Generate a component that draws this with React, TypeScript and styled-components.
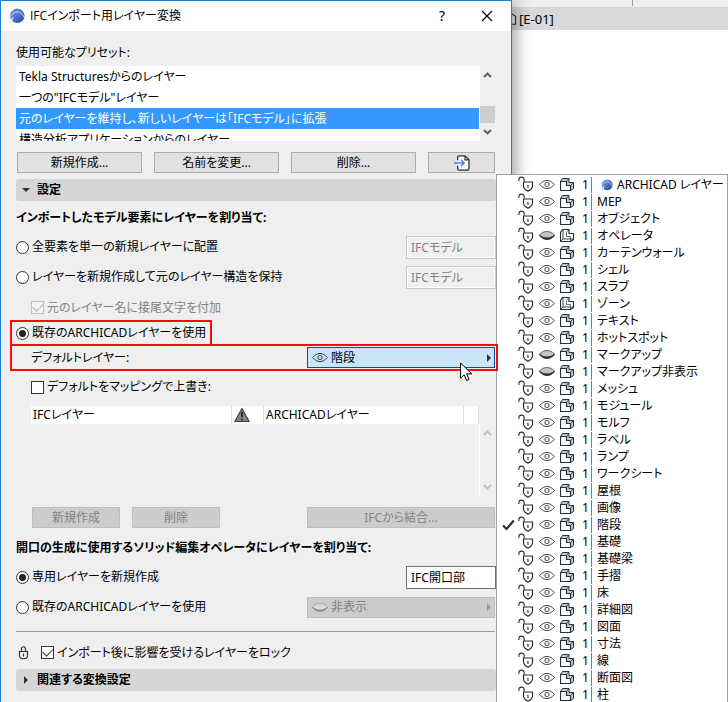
import React, { useState } from "react";
import styled, { createGlobalStyle, css } from "styled-components";

const Global = createGlobalStyle`
  * { box-sizing: border-box; }
  body {
    margin: 0;
    background: #fff;
    color: #000;
    font-family: "Noto Sans", "Noto Sans CJK JP", sans-serif;
    font-size: 12px;
    line-height: 16px;
    font-feature-settings: "palt";
  }
  button, input { font: inherit; font-feature-settings: inherit; color: inherit; margin: 0; }
  svg { display: block; flex: none; }
`;

const INK = "#263238";

/* ---------- icons ---------- */

const Logo = ({ size = 16 }: { size?: number }) => (
  <svg width={size} height={size} viewBox="0 0 16 16" aria-hidden="true">
    <defs>
      <linearGradient id="logoBlue" x1="0" y1="0" x2="1" y2="1">
        <stop offset="0" stopColor="#7d9fe0" />
        <stop offset="1" stopColor="#2345ad" />
      </linearGradient>
    </defs>
    <circle cx="8.2" cy="7.8" r="7.3" fill="url(#logoBlue)" />
    <path d="M.4 10.500C2.500 6 5.500 3.800 8.800 4c3.200.2 5 2.400 6 5.500" fill="none" stroke="#e6edfa" strokeWidth=".8" />
    <path d="M.8 15.200C1.300 12 2.800 9.500 5 8.300c-1.200 2-1.600 4.200-1.500 6.900z" fill="#dfe8f8" />
  </svg>
);

const Unlocked = () => (
  <svg width="16" height="17" viewBox="0 0 16 17" fill="none" stroke={INK} strokeWidth="1.1" aria-hidden="true">
    <path d="M.9 5V3.500C.9.300 6.200.300 6.200 3.500v2.300" />
    <path d="M5.500 6h9v4c0 2.400-2 3.900-4.500 5.200C7.500 13.900 5.500 12.400 5.500 10z" strokeWidth="1.200" />
    <path d="M9.200 9.500h.8v2.500" />
  </svg>
);

const Padlock = () => (
  <svg width="12" height="14" viewBox="0 0 12 14" fill="none" stroke={INK} strokeWidth="1.1" aria-hidden="true">
    <path d="M3.5 5.500V3a2 2.300 0 0 1 4 0v2.500" />
    <path d="M1.500 5.500h8v4.300c0 1.700-1.700 3-4 3s-4-1.300-4-3z" />
    <path d="M5.500 7.500v3" />
  </svg>
);

const Eye = () => (
  <svg width="16" height="9" viewBox="0 0 16 9" fill="none" stroke={INK} aria-hidden="true">
    <path d="M.6 4.500C3 1.700 5.400.5 8 .5s5 1.200 7.400 4C13 7.300 10.600 8.500 8 8.500S3 7.300.6 4.500z" strokeWidth=".9" />
    <rect x="6" y="2.500" width="4" height="4" rx="1.400" strokeWidth=".9" />
    <path d="M7.500 4h1v1h-1z" stroke="none" fill="#aab4b8" />
  </svg>
);

const ClosedEye = ({ faded = false }: { faded?: boolean }) => (
  <svg width="16" height="9" viewBox="0 0 16 9" aria-hidden="true">
    <path d="M.5 4C3 1.500 5.400.500 8 .500s5 1 7.500 3.500C13 6.300 10.600 7.300 8 7.300S3 6.300.5 4z" fill={faded ? "#dadada" : "#c3c7c9"} stroke={faded ? "#999" : INK} strokeWidth=".7" />
    <path d="M.3 3.700C3 5.800 5.400 6.500 8 6.500s5-.7 7.700-2.800V5C13 7.900 10.600 8.900 8 8.900S3 7.900.3 5z" fill={faded ? "#8f8f8f" : INK} />
  </svg>
);

const Solid = () => (
  <svg width="15" height="13" viewBox="0 0 15 13" stroke={INK} strokeLinejoin="round" aria-hidden="true">
    <path d="M.5 3.500 2.500.5h6.500v4h4.500v6l-3 2z" fill="#c3c9cb" />
    <path d="M.5 3.500h6v4h4v5H.5z" fill="#fff" strokeWidth="1.200" />
    <path d="M6.500 3.500 9 .5M10.500 7.500l3-3" fill="none" strokeWidth=".8" />
  </svg>
);

const Wireframe = () => (
  <svg width="15" height="13" viewBox="0 0 15 13" fill="none" stroke={INK} strokeLinejoin="round" aria-hidden="true">
    <path d="M.5 3.500 2.500.5h6.500v4h4.500v6l-3 2H.5z" strokeWidth="1.200" />
    <path d="M3 .5v9.500h10M.5 12.500 3 10" strokeWidth=".9" />
    <path d="M6.500 3.500v4h4v5M6.500 3.500 9 .5" strokeWidth=".7" />
  </svg>
);

const Tick = () => (
  <svg width="13" height="12" viewBox="0 0 13 12" fill="none" stroke={INK} strokeWidth="2.200" aria-hidden="true">
    <path d="M1 6.500 4.500 10 11.800 1.500" />
  </svg>
);

const ImportDoc = () => (
  <svg width="16" height="16" viewBox="0 0 16 16" fill="none" aria-hidden="true">
    <path d="M3.700 5.200V2.200Q3.700.8 5 .8H11l4 4V13.500Q15 15.200 13.500 15.200H5Q3.700 15.200 3.700 13.700V10.800" fill="#fff" stroke={INK} strokeWidth="1.300" />
    <path d="M11 1v3.800h4" stroke={INK} strokeWidth="1.200" />
    <path d="M0 8h10M7 4.800 10.200 8 7 11.200" stroke="#2f86ea" strokeWidth="1.400" />
  </svg>
);

const Warning = () => (
  <svg width="16" height="16" viewBox="0 0 16 16" aria-hidden="true">
    <path d="M8 1.500 15.200 14.500H.8z" fill="#7c868a" stroke="#3a464b" strokeWidth="1.200" strokeLinejoin="round" />
    <path d="M8 5v5.200M8 11.400v1.800" stroke="#1d282d" strokeWidth="1.800" />
  </svg>
);

const Chevron = ({ up = false }: { up?: boolean }) => (
  <svg width="9" height="6" viewBox="0 0 9 6" fill="none" stroke="currentColor" strokeWidth="1.900" aria-hidden="true">
    <path d={up ? "M1 5 4.500 1.500 8 5" : "M1 1 4.500 4.500 8 1"} />
  </svg>
);

const Triangle = ({ down = false }: { down?: boolean }) => (
  <svg width="8" height="8" viewBox="0 0 8 8" fill="currentColor" aria-hidden="true">
    <path d={down ? "M0 2h8L4 6z" : "M2 0v8l4-4z"} />
  </svg>
);

const Close = () => (
  <svg width="12" height="12" viewBox="0 0 12 12" fill="none" stroke="#000" strokeWidth="1.100" aria-hidden="true">
    <path d="M1 1l10 10M11 1 1 11" />
  </svg>
);

const StoryIcon = () => (
  <svg width="11" height="12" viewBox="0 0 11 12" fill="#eee" stroke={INK} strokeWidth="1.100" aria-hidden="true">
    <path d="M1 4 5.500.8 9.500 3.200V11.200H1z" />
  </svg>
);

const Pointer = () => (
  <svg width="13" height="20" viewBox="0 0 13 20" aria-hidden="true">
    <path d="M.6 1v15.200l3.600-3.400 2.500 5.600 2.400-1-2.500-5.500h5.200z" fill="#fff" stroke="#000" strokeWidth="1" />
  </svg>
);

/* ---------- page ---------- */

const Page = styled.div`
  position: relative;
  display: grid;
  grid-template-columns: minmax(0, 1fr) 216px;
  min-height: 100vh;
  overflow: hidden;
`;

const Workspace = styled.div`
  background: #fff;
`;

const RulerStrip = styled.div`
  height: 7px;
  padding-left: 120px;
  background: #efefef;
  &::before {
    content: "";
    display: block;
    width: 1px;
    height: 6px;
    background: #999;
  }
`;

const ViewTab = styled.div`
  display: flex;
  align-items: center;
  gap: 2px;
  height: 23px;
  margin-left: -6px;
  background: #d9d9d9;
  font-size: 13px;
`;

const Dialog = styled.section`
  position: relative;
  border: 1px solid #1b80d2;
  border-bottom: 0;
  background: #efefef;
  box-shadow: 3px 4px 16px rgba(0, 0, 0, 0.4);
`;

const TitleBar = styled.header`
  display: flex;
  align-items: center;
  height: 30px;
  padding: 0 10px 0 8px;
  background: #fff;
`;

const Title = styled.h1`
  flex: 1;
  margin: 0 0 0 5px;
  font-family: "Open Sans", "Noto Sans CJK JP", sans-serif;
  font-size: 12px;
  font-weight: 400;
`;

const TitleButton = styled.button`
  display: grid;
  place-items: center;
  width: 28px;
  height: 28px;
  margin-left: 17px;
  padding: 0;
  border: 0;
  background: none;
  font-size: 14px;
`;

const Body = styled.div`
  display: flex;
  flex-direction: column;
  padding: 0 15px 11px;
`;

const PresetLabel = styled.div`
  padding: 14px 0 5px;
`;

const PresetBox = styled.div`
  display: flex;
  height: 75px;
`;

const PresetList = styled.ul`
  flex: 1;
  margin: 0;
  padding: 0 1px 0 0;
  overflow: hidden;
  list-style: none;
  background: #fff;
`;

const Preset = styled.li<{ $selected?: boolean }>`
  padding: 0 3px;
  line-height: 21px;
  white-space: nowrap;
  ${(p) => p.$selected && css`background: #3399ff; color: #fff;`}
`;

const ScrollBar = styled.div<{ $idle?: boolean }>`
  display: flex;
  flex-direction: column;
  justify-content: space-between;
  width: ${(p) => (p.$idle ? "17px" : "16px")};
  color: ${(p) => (p.$idle ? "#bfbfbf" : "#5c5c5c")};
  border-left: ${(p) => (p.$idle ? "1px solid #fff" : "0")};
`;

const ScrollButton = styled.button`
  display: grid;
  place-items: center;
  width: 15px;
  height: 18px;
  padding: 0;
  border: 0;
  background: none;
  color: inherit;
`;

const Thumb = styled.div`
  width: 15px;
  height: 17px;
  margin-top: auto;
  background: #cdcdcd;
`;

const ButtonRow = styled.div`
  display: grid;
  grid-template-columns: 125fr 125fr 125fr 67fr;
  gap: 12px;
  margin: 11px 1px 6px;
`;

const MappingButtons = styled.div`
  display: flex;
  gap: 12px;
  margin: 11px 1px 0 16px;
`;

const PushButton = styled.button<{ $width?: number; $end?: boolean }>`
  display: flex;
  align-items: center;
  justify-content: center;
  width: ${(p) => (p.$width ? `${p.$width}px` : "auto")};
  height: 21px;
  margin-left: ${(p) => (p.$end ? "auto" : "0")};
  padding: 0;
  border: 1px solid #adadad;
  background: #e1e1e1;
  &:disabled { border-color: #bfbfbf; background: #cccccc; color: #838383; }
`;

const Section = styled.button`
  display: flex;
  align-items: center;
  gap: 7px;
  height: 22px;
  padding: 0 6px;
  border: 0;
  border-radius: 3px;
  background: #d6d6d6;
  color: #333;
  font-weight: 700;
  & > span { color: #000; }
`;

const Heading = styled.h2`
  display: flex;
  align-items: center;
  height: 31px;
  margin: 0;
  padding-top: 2px;
  font-size: 12px;
  font-weight: 700;
`;

const SecondHeading = styled(Heading)`
  height: 34px;
  padding-top: 5px;
`;

const Row = styled.div`
  display: flex;
  align-items: center;
  justify-content: space-between;
  height: 30px;
`;

const Choice = styled.label<{ $disabled?: boolean }>`
  display: flex;
  align-items: center;
  gap: 3px;
  white-space: nowrap;
  color: ${(p) => (p.$disabled ? "#838383" : "#000")};
`;

const Radio = styled.input.attrs({ type: "radio" })`
  appearance: none;
  width: 13px;
  height: 13px;
  border: 1px solid #333;
  border-radius: 50%;
  background: #fff;
  &:checked { background: radial-gradient(circle, #222 0 3px, #fff 4px); }
`;

const Check = styled.input.attrs({ type: "checkbox" })`
  appearance: none;
  display: grid;
  place-items: center;
  width: 13px;
  height: 13px;
  border: 1px solid #333;
  background: #fff;
  &:disabled { border-color: #c0c0c0; background: #f5f5f5; }
  &:checked::after {
    content: "";
    width: 9px;
    height: 5px;
    margin-top: -3px;
    border: solid #333;
    border-width: 0 0 1px 1px;
    rotate: -45deg;
  }
  &:disabled:checked::after { border-color: #b0b0b0; }
`;

const NameInput = styled.input`
  width: 90px;
  height: 23px;
  padding: 0 4px;
  border: 1px solid #707070;
  background: #fff;
  &:disabled {
    border-color: #c8c8c8;
    box-shadow: inset 0 0 0 1px #fff;
    background: #f0f0f0;
    color: #838383;
  }
`;

const SuffixRow = styled.div`
  display: flex;
  align-items: center;
  height: 28px;
  padding: 3px 0 0 15px;
`;

const OverrideRow = styled.div`
  display: flex;
  align-items: center;
  height: 32px;
  padding-left: 15px;
`;

const Callout = styled.div`
  position: relative;
  z-index: 3;
  display: flex;
  align-items: center;
  justify-content: space-between;
  border: 2px solid #fb0a0a;
`;

const UseExisting = styled(Callout)`
  width: fit-content;
  height: 26px;
  margin-left: -6px;
  padding: 0 4px;
`;

const DefaultLayer = styled(Callout)`
  height: 27px;
  margin: -2px -2px 0 -6px;
  padding: 0 1px 0 19px;
`;

const LayerPicker = styled.button`
  display: flex;
  align-items: center;
  gap: 3px;
  width: 188px;
  height: 21px;
  padding: 0 1px 0 4px;
  border: 1px solid #005499;
  background: #cce4f7;
  & > span { flex: 1; text-align: left; }
  & > :last-child { color: #333; }
  &:disabled { border-color: #bfbfbf; background: #cccccc; color: #838383; }
  &:disabled > :last-child { color: #999; }
`;

const PickerRow = styled(Row)`
  padding-right: 1px;
`;

const Cursor = styled.div`
  position: absolute;
  top: 16px;
  right: 23px;
  pointer-events: none;
`;

const Mapping = styled.table`
  width: calc(100% - 32px);
  margin: 3px 0 0 15px;
  border-collapse: collapse;
  table-layout: fixed;
  background: #fff;
`;

const MappingHead = styled.th<{ $width?: number }>`
  width: ${(p) => (p.$width ? `${p.$width}px` : "auto")};
  height: 18px;
  padding: 0 2px;
  border-right: 1px solid #e2e2e2;
  font-weight: 400;
  text-align: left;
`;

const MappingBody = styled.div`
  display: flex;
  justify-content: flex-end;
  height: 72px;
`;

const Divider = styled.hr`
  width: calc(100% - 1px);
  height: 1px;
  margin: 9px 0 0;
  border: 0;
  background: #999;
`;

const LockRow = styled.div`
  display: flex;
  align-items: center;
  gap: 11px;
  height: 37px;
  padding: 4px 0 0 2px;
`;

/* ---------- layer menu ---------- */

const Menu = styled.div`
  position: absolute;
  z-index: 2;
  top: 174px;
  right: 0;
  width: 232px;
  padding-top: 1px;
  border: 1px solid #a0a0a8;
  background: #fff;
`;

const MenuItem = styled.button`
  display: grid;
  grid-template-columns: 21px 21px 21px 22px 9px minmax(0, 1fr);
  align-items: center;
  width: 100%;
  height: 17px;
  padding: 0;
  border: 0;
  background: none;
  text-align: left;
`;

const CheckCell = styled.span`
  padding-left: 5px;
`;

const LayerName = styled.span<{ $root?: boolean }>`
  display: flex;
  align-items: center;
  gap: 4px;
  padding-left: ${(p) => (p.$root ? "9px" : "5px")};
  border-left: 1px solid #808080;
  white-space: nowrap;
`;

type Layer = { name: string; hidden?: boolean; wire?: boolean; root?: boolean };

const layers: Layer[] = [
  { name: "ARCHICAD レイヤー", root: true },
  { name: "MEP" },
  { name: "オブジェクト" },
  { name: "オペレータ", hidden: true, wire: true },
  { name: "カーテンウォール" },
  { name: "シェル" },
  { name: "スラブ" },
  { name: "ゾーン", wire: true },
  { name: "テキスト" },
  { name: "ホットスポット" },
  { name: "マークアップ", hidden: true },
  { name: "マークアップ非表示", hidden: true },
  { name: "メッシュ" },
  { name: "モジュール" },
  { name: "モルフ" },
  { name: "ラベル" },
  { name: "ランプ" },
  { name: "ワークシート" },
  { name: "屋根" },
  { name: "画像" },
  { name: "階段" },
  { name: "基礎" },
  { name: "基礎梁" },
  { name: "手摺" },
  { name: "床" },
  { name: "詳細図" },
  { name: "図面" },
  { name: "寸法" },
  { name: "線" },
  { name: "断面図" },
  { name: "柱" },
];

const presets = [
  "Tekla Structuresからのレイヤー",
  "一つの\"IFCモデル\"レイヤー",
  "元のレイヤーを維持し、新しいレイヤーは「IFCモデル」に拡張",
  "構造分析アプリケーションからのレイヤー",
];

export default function App() {
  const [layer, setLayer] = useState("階段");
  const [preset, setPreset] = useState(2);

  return (
    <>
      <Global />
      <Page>
        <Dialog role="dialog" aria-labelledby="title">
          <TitleBar>
            <Logo size={16} />
            <Title id="title">IFCインポート用レイヤー変換</Title>
            <TitleButton aria-label="ヘルプ">?</TitleButton>
            <TitleButton aria-label="閉じる"><Close /></TitleButton>
          </TitleBar>
          <Body>
            <PresetLabel id="presets">使用可能なプリセット:</PresetLabel>
            <PresetBox>
              <PresetList role="listbox" aria-labelledby="presets">
                {presets.map((p, i) => (
                  <Preset key={p} role="option" aria-selected={i === preset} $selected={i === preset} onClick={() => setPreset(i)}>
                    {p}
                  </Preset>
                ))}
              </PresetList>
              <ScrollBar>
                <ScrollButton aria-label="上へ"><Chevron up /></ScrollButton>
                <Thumb />
                <ScrollButton aria-label="下へ"><Chevron /></ScrollButton>
              </ScrollBar>
            </PresetBox>
            <ButtonRow>
              <PushButton>新規作成...</PushButton>
              <PushButton>名前を変更...</PushButton>
              <PushButton>削除...</PushButton>
              <PushButton aria-label="読み込み"><ImportDoc /></PushButton>
            </ButtonRow>

            <Section aria-expanded="true"><Triangle down /><span>設定</span></Section>
            <Heading>インポートしたモデル要素にレイヤーを割り当て:</Heading>
            <Row>
              <Choice><Radio name="elements" />全要素を単一の新規レイヤーに配置</Choice>
              <NameInput aria-label="新規レイヤー名" defaultValue="IFCモデル" disabled />
            </Row>
            <Row>
              <Choice><Radio name="elements" />レイヤーを新規作成して元のレイヤー構造を保持</Choice>
              <NameInput aria-label="接尾文字" defaultValue="IFCモデル" disabled />
            </Row>
            <SuffixRow>
              <Choice $disabled><Check defaultChecked disabled />元のレイヤー名に接尾文字を付加</Choice>
            </SuffixRow>
            <UseExisting>
              <Choice><Radio name="elements" defaultChecked />既存のARCHICADレイヤーを使用</Choice>
            </UseExisting>
            <DefaultLayer>
              <label htmlFor="defaultLayer">デフォルトレイヤー:</label>
              <LayerPicker id="defaultLayer" aria-haspopup="menu" aria-expanded="true">
                <Eye /><span>{layer}</span><Triangle />
              </LayerPicker>
              <Cursor><Pointer /></Cursor>
            </DefaultLayer>
            <OverrideRow>
              <Choice><Check />デフォルトをマッピングで上書き:</Choice>
            </OverrideRow>

            <Mapping>
              <thead>
                <tr>
                  <MappingHead>IFCレイヤー</MappingHead>
                  <MappingHead $width={32}><Warning /></MappingHead>
                  <MappingHead $width={200}>ARCHICADレイヤー</MappingHead>
                  <MappingHead $width={15} />
                </tr>
              </thead>
            </Mapping>
            <MappingBody>
              <ScrollBar $idle>
                <ScrollButton disabled aria-label="上へ"><Chevron up /></ScrollButton>
                <ScrollButton disabled aria-label="下へ"><Chevron /></ScrollButton>
              </ScrollBar>
            </MappingBody>
            <MappingButtons>
              <PushButton $width={88} disabled>新規作成</PushButton>
              <PushButton $width={88} disabled>削除</PushButton>
              <PushButton $width={188} $end disabled>IFCから結合...</PushButton>
            </MappingButtons>

            <SecondHeading>開口の生成に使用するソリッド編集オペレータにレイヤーを割り当て:</SecondHeading>
            <Row>
              <Choice><Radio name="openings" defaultChecked />専用レイヤーを新規作成</Choice>
              <NameInput aria-label="専用レイヤー名" defaultValue="IFC開口部" />
            </Row>
            <PickerRow>
              <Choice><Radio name="openings" />既存のARCHICADレイヤーを使用</Choice>
              <LayerPicker disabled><ClosedEye faded /><span>非表示</span><Triangle /></LayerPicker>
            </PickerRow>
            <Divider />
            <LockRow>
              <Padlock />
              <Choice><Check defaultChecked />インポート後に影響を受けるレイヤーをロック</Choice>
            </LockRow>
            <Section aria-expanded="false"><Triangle /><span>関連する変換設定</span></Section>
          </Body>
        </Dialog>
        <Workspace>
          <RulerStrip />
          <ViewTab><StoryIcon />[E-01]</ViewTab>
        </Workspace>
        <Menu role="menu">
          {layers.map((l) => (
            <MenuItem key={l.name} role="menuitemradio" aria-checked={l.name === layer} onClick={() => setLayer(l.name)}>
              <CheckCell>{l.name === layer && <Tick />}</CheckCell>
              <Unlocked />
              {l.hidden ? <ClosedEye /> : <Eye />}
              {l.wire ? <Wireframe /> : <Solid />}
              <span>1</span>
              <LayerName $root={l.root}>{l.root && <Logo size={12} />}{l.name}</LayerName>
            </MenuItem>
          ))}
        </Menu>
      </Page>
    </>
  );
}
